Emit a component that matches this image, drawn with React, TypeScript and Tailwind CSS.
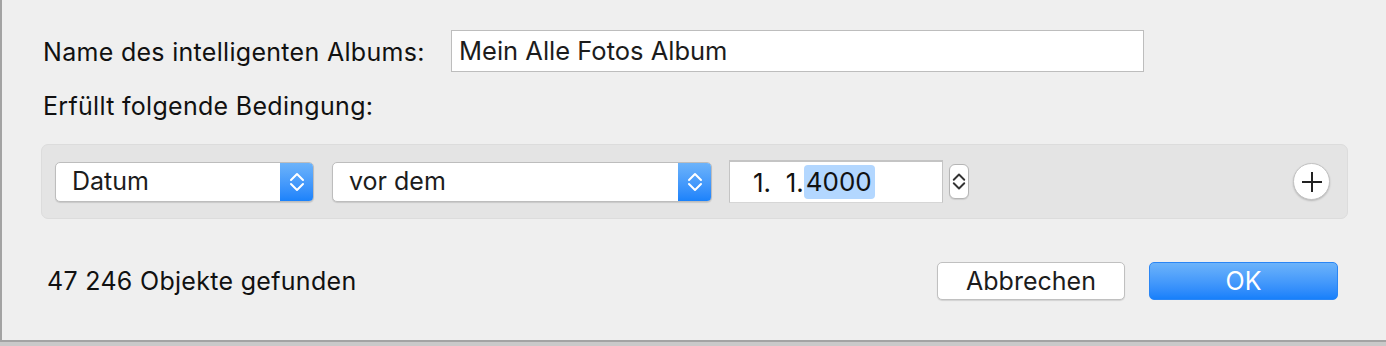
import React from "react";

const Chevrons = ({ color = "white", w = 16, h = 24, sw = 2 }: { color?: string; w?: number; h?: number; sw?: number }) => (
  <svg width={w} height={h} viewBox="0 0 16 24" fill="none">
    <path d="M2 10 L8 4 L14 10" stroke={color} strokeWidth={sw} strokeLinecap="round" strokeLinejoin="round" />
    <path d="M2 14 L8 20 L14 14" stroke={color} strokeWidth={sw} strokeLinecap="round" strokeLinejoin="round" />
  </svg>
);

const PopUp = ({ label, width }: { label: string; width: string }) => (
  <div
    className={`${width} h-[40px] flex items-stretch bg-white rounded-[5px] border border-[#bdbdbd] shadow-[0_1px_1px_rgba(0,0,0,0.12)] overflow-hidden`}
  >
    <div className="flex-1 flex items-center pl-[16px] text-[25px] text-[#1c1c1c]">{label}</div>
    <div className="w-[33px] flex items-center justify-center bg-gradient-to-b from-[#6cb3fa] to-[#1a82fb]">
      <Chevrons />
    </div>
  </div>
);

export default function App() {
  return (
    <div
      className="w-[1386px] h-[346px] bg-[#c9c9c9] overflow-hidden"
      style={{ fontFamily: '"Inter", "Liberation Sans", sans-serif' }}
    >
      <div className="h-[342px] bg-[#efefef] border-l-2 border-b-2 border-[#a3a3a3] flex flex-col">
        {/* Name */}
        <div className="flex items-center h-[42px] mt-[30px] pl-[41px]">
          <div className="w-[408px] text-[25px] tracking-[0.3px] text-[#111] pt-[4px]">Name des intelligenten Albums:</div>
          <div className="w-[693px] h-[42px] bg-white border border-[#bdbdbd] flex items-center pl-[7px] text-[25.5px] text-[#1c1c1c]">
            Mein Alle Fotos Album
          </div>
        </div>

        <div className="pl-[41px] mt-[19px] h-[30px] text-[25px] tracking-[0.3px] text-[#111] leading-[30px]">Erfüllt folgende Bedingung:</div>

        {/* Condition */}
        <div className="ml-[39px] mt-[23px] w-[1307px] h-[75px] bg-[#e4e4e4] border border-[#dcdcdc] rounded-[7px] flex items-center pl-[13px] pr-[17px]">
          <PopUp label="Datum" width="w-[259px]" />
          <div className="w-[18px]" />
          <PopUp label="vor dem" width="w-[380px]" />
          <div className="w-[17px]" />
          <div className="w-[214px] h-[43px] bg-white border-t-2 border-x border-b border-[#c4c4c4] border-b-[#d6d6d6] flex items-center pl-[23px] text-[26px] text-[#111]">
            <span>1.&nbsp;&nbsp;1.</span>
            <span className="bg-[#b3d7ff] rounded-[4px] pl-[2px] pr-[3px] leading-[34px]">4000</span>
          </div>
          <div className="ml-[6px] w-[20px] h-[35px] bg-white border border-[#b5b5b5] rounded-[6px] flex items-center justify-center shadow-[0_1px_1px_rgba(0,0,0,0.1)]">
            <Chevrons color="#333" w={14} h={21} sw={2.2} />
          </div>
          <div className="flex-1" />
          <div className="w-[37px] h-[37px] rounded-full bg-white border border-[#c2c2c2] shadow-[0_1px_2px_rgba(0,0,0,0.2)] flex items-center justify-center">
            <svg width="22" height="22" viewBox="0 0 22 22">
              <path d="M11 1 V21 M1 11 H21" stroke="#222" strokeWidth="2" />
            </svg>
          </div>
        </div>

        {/* Footer */}
        <div className="flex items-center h-[38px] mt-[43px] pl-[45px] pr-[48px]">
          <div className="flex-1 text-[25px] tracking-[0.3px] text-[#111] pt-[2px]">47 246 Objekte gefunden</div>
          <button className="w-[188px] h-[38px] bg-white border border-[#c0c0c0] rounded-[5px] shadow-[0_1px_1px_rgba(0,0,0,0.12)] text-[25px] text-[#1c1c1c]">
            Abbrechen
          </button>
          <button className="ml-[24px] w-[189px] h-[38px] rounded-[5px] bg-gradient-to-b from-[#6cb3fa] to-[#1680fb] border border-[#2a86f5] text-[25px] text-white">
            OK
          </button>
        </div>
      </div>
    </div>
  );
}
